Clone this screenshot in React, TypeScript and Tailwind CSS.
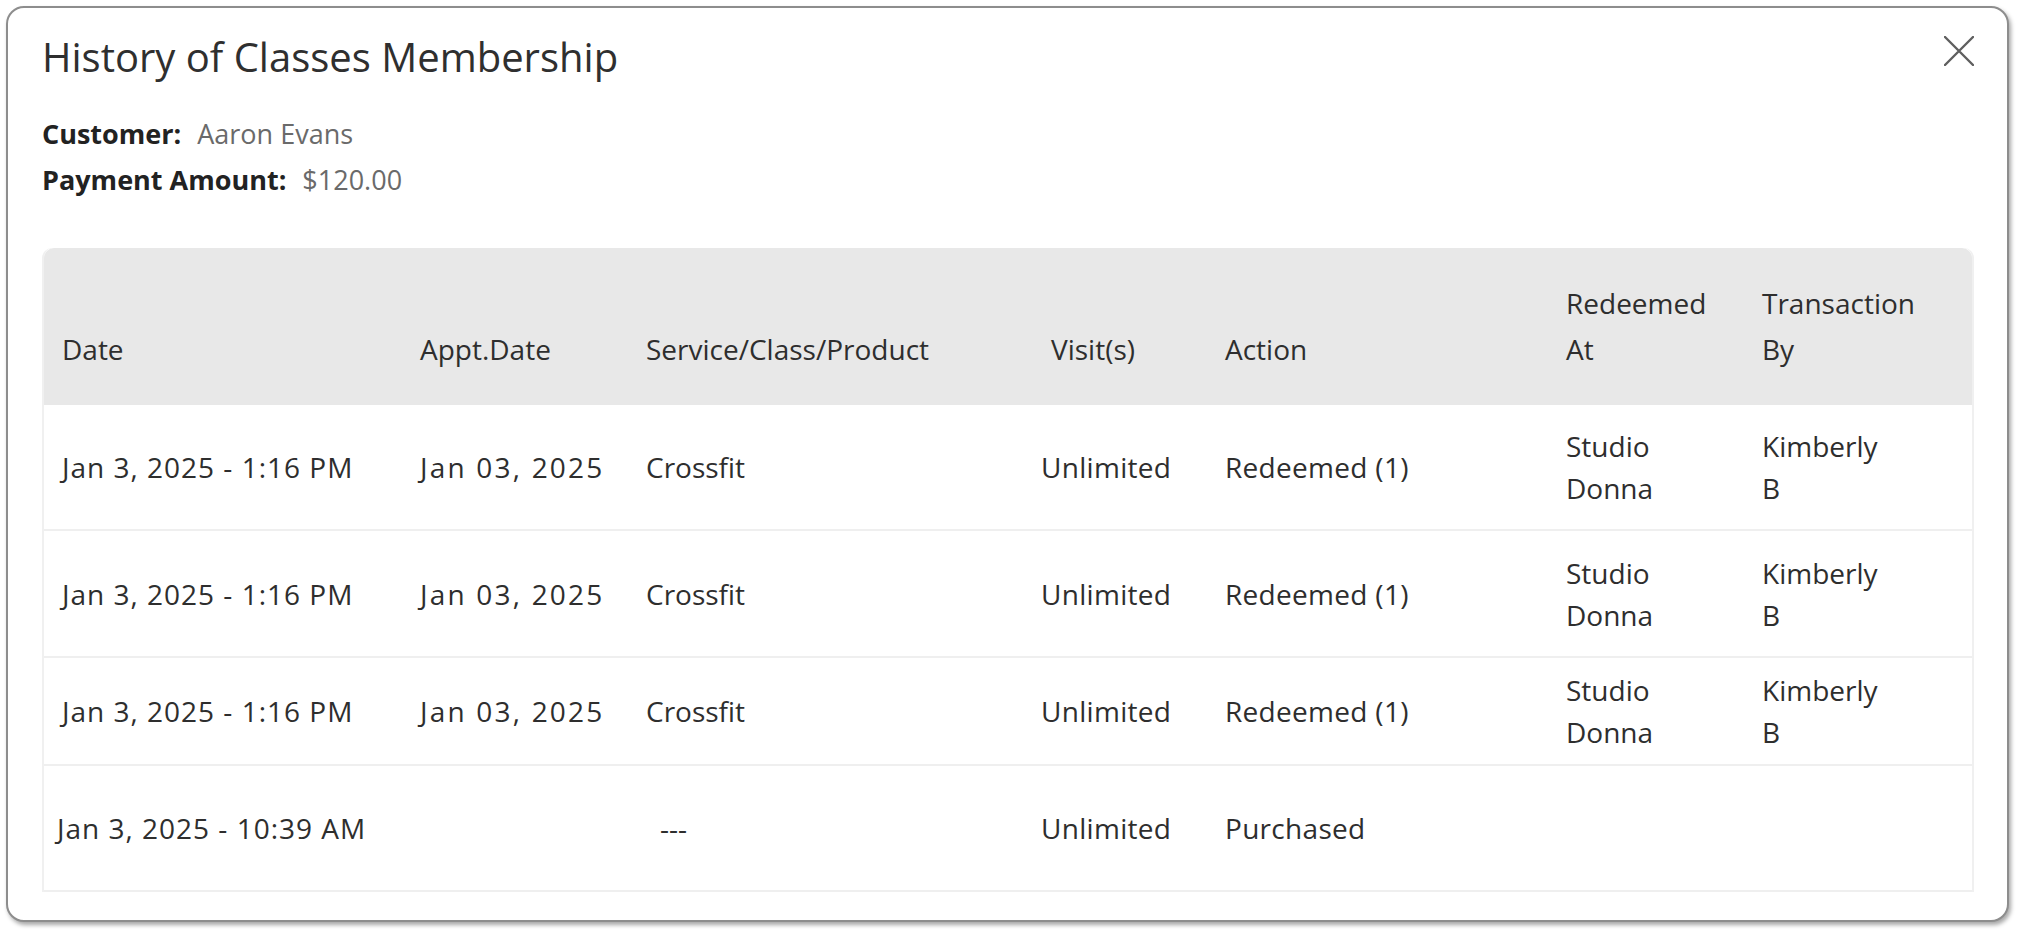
import React from "react";

type Row = {
  date: string;
  appt: string;
  service: string;
  visits: string;
  action: string;
  redeemedAt: string[];
  by: string[];
  height: string;
  datePad?: string;
  servicePad?: string;
};

const rows: Row[] = [
  {
    date: "Jan 3, 2025 - 1:16 PM",
    appt: "Jan 03, 2025",
    service: "Crossfit",
    visits: "Unlimited",
    action: "Redeemed (1)",
    redeemedAt: ["Studio", "Donna"],
    by: ["Kimberly", "B"],
    height: "h-[126px]",
  },
  {
    date: "Jan 3, 2025 - 1:16 PM",
    appt: "Jan 03, 2025",
    service: "Crossfit",
    visits: "Unlimited",
    action: "Redeemed (1)",
    redeemedAt: ["Studio", "Donna"],
    by: ["Kimberly", "B"],
    height: "h-[127px]",
  },
  {
    date: "Jan 3, 2025 - 1:16 PM",
    appt: "Jan 03, 2025",
    service: "Crossfit",
    visits: "Unlimited",
    action: "Redeemed (1)",
    redeemedAt: ["Studio", "Donna"],
    by: ["Kimberly", "B"],
    height: "h-[108px]",
  },
  {
    date: "Jan 3, 2025 - 10:39 AM",
    appt: "",
    service: "---",
    visits: "Unlimited",
    action: "Purchased",
    redeemedAt: [],
    by: [],
    height: "h-[126px]",
    datePad: "pl-[13px]",
    servicePad: "pl-[32px]",
  },
];

// column widths measured off the screenshot
const grid = "grid grid-cols-[358px_226px_395px_184px_341px_196px_228px]";

function CloseIcon() {
  return (
    <svg width="30" height="30" viewBox="0 0 30 30" fill="none">
      <path d="M1 1 L29 29 M29 1 L1 29" stroke="#5f5f5f" strokeWidth="2.4" strokeLinecap="round" />
    </svg>
  );
}

export default function App() {
  return (
    <div className="bg-white pt-[6px] pl-[6px] pr-[8px] pb-[8px] font-['Open_Sans',sans-serif] text-[#333]">
      <div className="relative rounded-[18px] border-2 border-[#8d8d8d] bg-white pt-[26px] pl-[34px] pr-[33px] pb-[28px] shadow-[2px_3px_4px_rgba(0,0,0,0.35)]">
        <button className="absolute top-[28px] right-[33px]">
          <CloseIcon />
        </button>

        <h1 className="text-[40px] leading-[46px] font-normal text-[#2f2f2f]">
          History of Classes Membership
        </h1>

        <div className="mt-[31px] text-[27px] leading-[46px]">
          <div>
            <span className="font-bold text-[#222]">Customer:</span>
            <span className="ml-[16px] text-[#6a6a6a]">Aaron Evans</span>
          </div>
          <div>
            <span className="font-bold text-[#222]">Payment Amount:</span>
            <span className="ml-[16px] text-[#6a6a6a]">$120.00</span>
          </div>
        </div>

        <div className="mt-[45px] rounded-t-[10px] border-x-2 border-[#f0f0f0] text-[28px] text-[#2e2e2e]">
          {/* header */}
          <div className={`${grid} h-[157px] items-end rounded-t-[10px] bg-[#e8e8e8] pb-[33px] leading-[46px]`}>
            <div className="pl-[18px]">Date</div>
            <div className="pl-[18px]">Appt.Date</div>
            <div className="pl-[18px]">Service/Class/Product</div>
            <div className="pl-[28px]">Visit(s)</div>
            <div className="pl-[18px]">Action</div>
            <div className="pl-[18px]">
              Redeemed
              <br />
              At
            </div>
            <div className="pl-[18px]">
              Transaction
              <br />
              By
            </div>
          </div>

          {rows.map((row, i) => (
            <div
              key={i}
              className={`${grid} ${row.height} items-center border-b-2 border-[#efefef] leading-[42px]`}
            >
              <div className={`${row.datePad ?? "pl-[18px]"} tracking-[1px]`}>{row.date}</div>
              <div className="pl-[18px] tracking-[2.2px]">{row.appt}</div>
              <div className={row.servicePad ?? "pl-[18px]"}>{row.service}</div>
              <div className="pl-[18px] tracking-[0.3px]">{row.visits}</div>
              <div className="pl-[18px] tracking-[0.3px]">{row.action}</div>
              <div className="pl-[18px]">
                {row.redeemedAt.map((l) => (
                  <div key={l}>{l}</div>
                ))}
              </div>
              <div className="pl-[18px]">
                {row.by.map((l) => (
                  <div key={l}>{l}</div>
                ))}
              </div>
            </div>
          ))}
        </div>
      </div>
    </div>
  );
}
